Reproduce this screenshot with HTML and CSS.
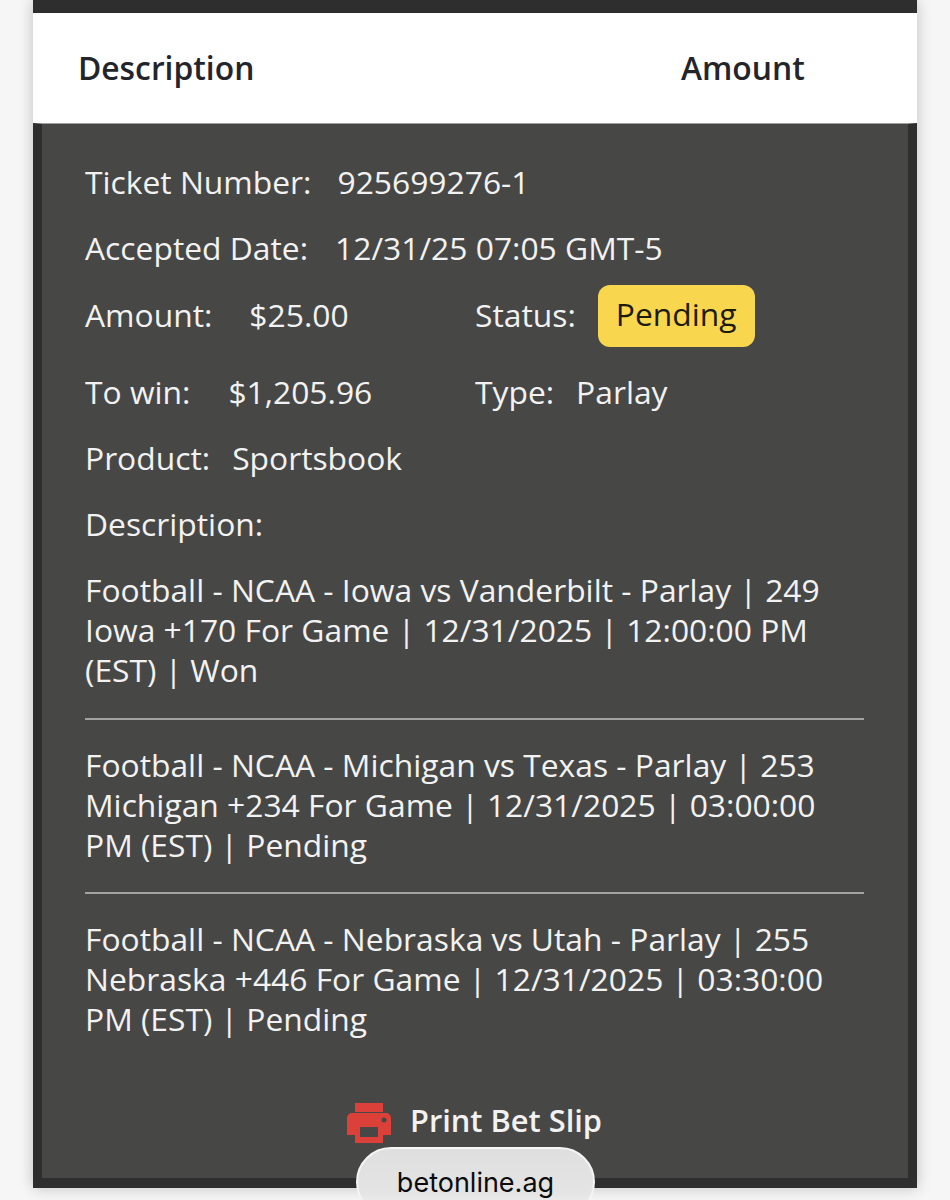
FILE: index.html
```html
<!DOCTYPE html>
<html lang="en">
<head>
<meta charset="utf-8"/>
<title>Bet Slip</title>
<meta name="viewport" content="width=device-width">
<link rel="stylesheet" href="styles.css">
</head>
<body>
<div class="sheet">
	<div class="top-bar"></div>
	<div class="head">
		<span class="head-desc">Description</span>
		<span class="head-amount">Amount</span>
	</div>
	<div class="ticket">
		<div class="row"><span>Ticket Number:</span><span class="val val-ticket">925699276-1</span></div>
		<div class="row"><span>Accepted Date:</span><span class="val val-date">12/31/25 07:05 GMT-5</span></div>
		<div class="pair pair-status">
			<div class="row"><span>Amount:</span><span class="val val-amount">$25.00</span></div>
			<div class="row"><span>Status:</span><span class="badge">Pending</span></div>
		</div>
		<div class="pair">
			<div class="row"><span>To win:</span><span class="val val-win">$1,205.96</span></div>
			<div class="row"><span>Type:</span><span class="val val-type">Parlay</span></div>
		</div>
		<div class="row"><span>Product:</span><span class="val val-product">Sportsbook</span></div>
		<div class="row">Description:</div>
		<p class="leg">Football - NCAA - Iowa vs Vanderbilt - Parlay | 249<br>Iowa +170 For Game | 12/31/2025 | 12:00:00 PM<br>(EST) | Won</p>
		<hr>
		<p class="leg">Football - NCAA - Michigan vs Texas - Parlay | 253<br>Michigan +234 For Game | 12/31/2025 | 03:00:00<br>PM (EST) | Pending</p>
		<hr>
		<p class="leg">Football - NCAA - Nebraska vs Utah - Parlay | 255<br>Nebraska +446 For Game | 12/31/2025 | 03:30:00<br>PM (EST) | Pending</p>
		<div class="print">
			<svg class="print-icon" viewBox="0 0 44 40" width="44" height="40" aria-hidden="true">
				<path fill="#dc4139" fill-rule="evenodd" d="M8 0h28v9H8zM5 10h34a5 5 0 0 1 5 5v17h-8v8H8v-8H0V15a5 5 0 0 1 5-5zm8 14v10h18V24zm24-9.500a2.500 2.500 0 1 0 0 5 2.500 2.500 0 0 0 0-5z"/>
			</svg>
			<span>Print Bet Slip</span>
		</div>
	</div>
</div>
<div class="url-pill">betonline.ag</div>
</body>
</html>
```

FILE: styles.css
```css
html,
body {
	height:100%;
	overflow:hidden;
}
body {
	margin:0;
	background:#f6f6f6;
	font:400 31.8px/40px "Open Sans", sans-serif;
	color:#f2f2f2;
}
.sheet {
	margin:0 33px;
	height:1188px;
	background:#fff;
	box-shadow:0 0 14px rgba(0,0,0,.22);
}
.top-bar {
	height:13px;
	background:#2e2e2e;
}
.head {
	height:110px;
	display:flex;
	align-items:center;
	padding-left:45px;
	background:#fff;
	color:#23252a;
	font-weight:600;
}
.head-desc {
	width:603px;
}
.ticket {
	height:1065px;
	box-sizing:border-box;
	padding:38px 44px 0 43px;
	background:#474746;
	border:solid #2e2e2e;
	border-width:1px 9px 10px;
	border-top-color:#a0a0a0;
	display:flex;
	flex-direction:column;
	gap:26px;
}
.row {
	display:flex;
	align-items:center;
}
.pair {
	display:grid;
	grid-template-columns:390px 1fr;
}
.pair-status {
	margin:-11px 0 1px;
	height:62px;
}
.val-ticket { margin-left:26px; }
.val-date { margin-left:27px; }
.val-amount { margin-left:37px; }
.val-win { margin-left:38px; }
.val-type { margin-left:22px; }
.val-product { margin-left:22px; }
.badge {
	margin:2px 0 0 22px;
	padding:0 18px;
	height:62px;
	line-height:58px;
	border-radius:12px;
	background:#f8d64e;
	color:#1d1b10;
}
.leg {
	margin:0;
}
hr {
	margin:1px 0 -1px;
	height:2px;
	border:0;
	background:#a3a3a2;
}
.leg:nth-of-type(1) + hr {
	margin-top:2px;
}
.print {
	margin-top:32px;
	display:flex;
	justify-content:center;
	align-items:center;
	gap:19px;
	font-size:30.8px;
	font-weight:600;
}
.print-icon {
	margin-top:6px;
}
.url-pill {
	position:absolute;
	left:356px;
	top:1147px;
	width:239px;
	height:70px;
	box-sizing:border-box;
	padding-top:16px;
	border:2px solid #f4f4f4;
	border-radius:36px;
	background:linear-gradient(#dfdfdf, #e4e4e4 65%, #f4f4f4);
	color:#0c0c0c;
	font:400 27px/36px "Inter", sans-serif;
	text-align:center;
}
```
